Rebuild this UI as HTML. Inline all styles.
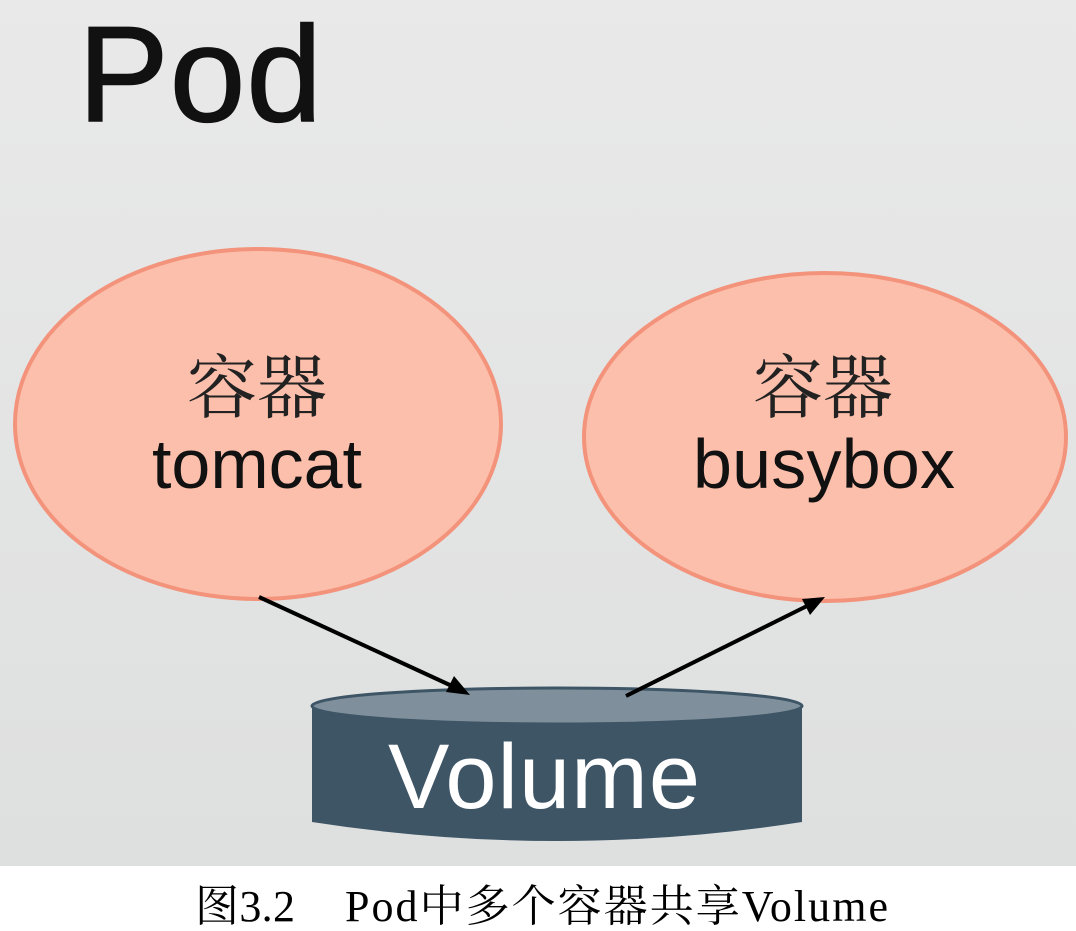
<!DOCTYPE html>
<html><head><meta charset="utf-8"><style>
body{margin:0;width:1076px;height:926px;background:#fff;overflow:hidden}
</style></head><body>
<svg width="1076" height="926" viewBox="0 0 1076 926" xmlns="http://www.w3.org/2000/svg">
<defs>
<linearGradient id="bg" x1="0" y1="0" x2="0" y2="1"><stop offset="0" stop-color="#e9e9e9"/><stop offset="1" stop-color="#dedfdf"/></linearGradient>
</defs>
<rect x="0" y="0" width="1076" height="866" fill="url(#bg)"/>
<text x="78" y="121" font-family="Liberation Sans, sans-serif" font-size="136" textLength="244" fill="#111" stroke="#111" stroke-width="1.5">Pod</text>
<ellipse cx="258" cy="424" rx="243" ry="175" fill="#fcbfab" stroke="#f3937b" stroke-width="4"/>
<ellipse cx="825" cy="437" rx="241" ry="164" fill="#fcbfab" stroke="#f3937b" stroke-width="4"/>
<text x="257" y="412" text-anchor="middle" font-family="Liberation Serif, 'Noto Serif CJK SC', serif" font-size="70" fill="#222">容器</text>
<text x="257" y="488" text-anchor="middle" font-family="Liberation Sans, sans-serif" font-size="70" textLength="210" fill="#111">tomcat</text>
<text x="823" y="412" text-anchor="middle" font-family="Liberation Serif, 'Noto Serif CJK SC', serif" font-size="70" fill="#222">容器</text>
<text x="824" y="488" text-anchor="middle" font-family="Liberation Sans, sans-serif" font-size="70" textLength="262" fill="#111">busybox</text>
<path d="M312,706 L312,822 Q557,860 802,822 L802,706 Z" fill="#3e5566"/>
<ellipse cx="557" cy="706" rx="245" ry="18" fill="#7f909c" stroke="#3e5566" stroke-width="3"/>
<text x="544" y="808" text-anchor="middle" font-family="Liberation Sans, sans-serif" font-size="92" textLength="312" fill="#fff">Volume</text>
<line x1="259" y1="597" x2="465" y2="692" stroke="#000" stroke-width="4"/>
<path d="M470,695 L446,692 L454,676 Z" fill="#000"/>
<line x1="626" y1="696" x2="815" y2="602" stroke="#000" stroke-width="4"/>
<path d="M825,597 L810,615 L802,599 Z" fill="#000"/>
<text x="195" y="921" font-family="Liberation Serif, 'Noto Serif CJK SC', serif" font-size="44" textLength="100" fill="#000">图3.2</text>
<text x="345" y="921" font-family="Liberation Serif, 'Noto Serif CJK SC', serif" font-size="44" textLength="543" fill="#000">Pod中多个容器共享Volume</text>
</svg>
</body></html>
